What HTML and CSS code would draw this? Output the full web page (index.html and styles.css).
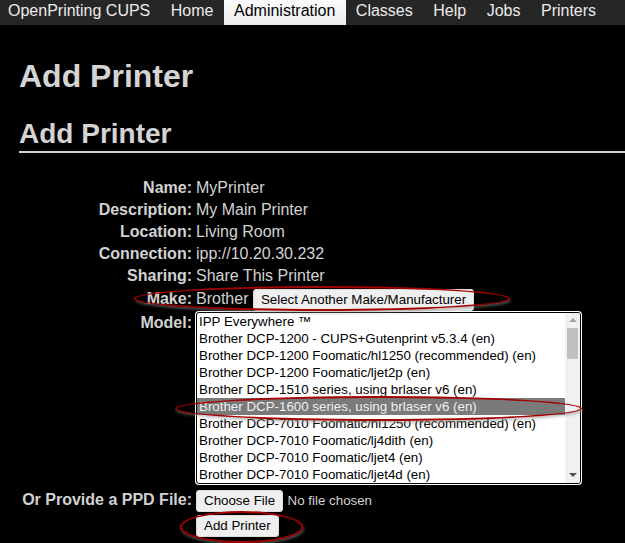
FILE: index.html
```html
<!DOCTYPE html>
<html lang="en">
<head>
<meta charset="utf-8">
<title>Add Printer - CUPS</title>
<link rel="stylesheet" href="styles.css">
</head>
<body>
<nav class="nav">
  <a class="nav-item">OpenPrinting CUPS</a>
  <a class="nav-item">Home</a>
  <a class="nav-item active">Administration</a>
  <a class="nav-item">Classes</a>
  <a class="nav-item">Help</a>
  <a class="nav-item">Jobs</a>
  <a class="nav-item">Printers</a>
</nav>
<main class="page">
  <h1 class="title">Add Printer</h1>
  <h2 class="subtitle">Add Printer</h2>
  <form class="form">
    <div class="label">Name:</div><div class="value">MyPrinter</div>
    <div class="label">Description:</div><div class="value">My Main Printer</div>
    <div class="label">Location:</div><div class="value">Living Room</div>
    <div class="label">Connection:</div><div class="value">ipp://10.20.30.232</div>
    <div class="label">Sharing:</div><div class="value">Share This Printer</div>
    <div class="label make">Make:</div><div class="value make">Brother <button type="button" class="btn">Select Another Make/Manufacturer</button></div>
    <div class="label">Model:</div>
    <div class="value">
      <div class="listbox" role="listbox">
        <div class="options">
          <div class="opt">IPP Everywhere ™</div>
          <div class="opt">Brother DCP-1200 - CUPS+Gutenprint v5.3.4 (en)</div>
          <div class="opt">Brother DCP-1200 Foomatic/hl1250 (recommended) (en)</div>
          <div class="opt">Brother DCP-1200 Foomatic/ljet2p (en)</div>
          <div class="opt">Brother DCP-1510 series, using brlaser v6 (en)</div>
          <div class="opt selected">Brother DCP-1600 series, using brlaser v6 (en)</div>
          <div class="opt">Brother DCP-7010 Foomatic/hl1250 (recommended) (en)</div>
          <div class="opt">Brother DCP-7010 Foomatic/lj4dith (en)</div>
          <div class="opt">Brother DCP-7010 Foomatic/ljet4 (en)</div>
          <div class="opt">Brother DCP-7010 Foomatic/ljet4d (en)</div>
        </div>
        <div class="scrollbar">
          <div class="arrow up"></div>
          <div class="track"><div class="thumb"></div></div>
          <div class="arrow down"></div>
        </div>
      </div>
    </div>
    <div class="label ppd">Or Provide a PPD File:</div>
    <div class="value ppd"><button type="button" class="btn">Choose File</button> <span class="nofile">No file chosen</span></div>
    <div class="label"></div>
    <div class="value submit"><button type="button" class="btn">Add Printer</button></div>
  </form>
</main>
<div class="annot e1"></div>
<div class="annot e2"></div>
<div class="annot e3"></div>
</body>
</html>
```
FILE: styles.css
```css
html, body {
  margin: 0;
  padding: 0;
  background: #000;
  height: 100%;
  overflow: hidden;
}
body {
  position: relative;
  font-family: "Liberation Sans", Arial, sans-serif;
  color: #d2d2d2;
  font-size: 16px;
}
.nav {
  display: flex;
  background: #262626;
  height: 25px;
}
.nav-item {
  font-size: 16px;
  line-height: 22px;
  padding: 0 10.5px 3px 10px;
  color: #ececec;
  white-space: nowrap;
}
.nav-item:first-child {
  padding-left: 8px;
}
.nav-item.active {
  background: linear-gradient(#fbfbfb, #ececec);
  color: #000;
}
.page {
  padding: 0 0 0 19px;
}
.title {
  margin: 33px 0 0;
  font-size: 32px;
  line-height: 36px;
  font-weight: bold;
  color: #d4d4d4;
}
.subtitle {
  margin: 24px 0 0;
  font-size: 28px;
  line-height: 32px;
  font-weight: bold;
  color: #d4d4d4;
  padding-bottom: 1px;
  border-bottom: 2px solid #d0d0d0;
}
.form {
  display: grid;
  grid-template-columns: 173px 1fr;
  column-gap: 4px;
  margin-top: 23.5px;
  line-height: 22px;
}
.label {
  font-weight: bold;
  text-align: right;
  white-space: nowrap;
}
.value {
  white-space: nowrap;
}
.make {
  padding: 1px 0;
}
.btn {
  font-family: "Liberation Sans", Arial, sans-serif;
  font-size: 13.33px;
  line-height: 16px;
  padding: 2px 7px 2px;
  background: #efefef;
  color: #000;
  border: 1px solid #dcdcdc;
  border-radius: 3px;
  vertical-align: baseline;
}
.listbox {
  display: flex;
  width: 383px;
  height: 170px;
  margin-top: 0;
  background: #fff;
  border: 1px solid #000;
  box-shadow: 0 0 0 1px #fff;
  border-radius: 3px;
  overflow: hidden;
  box-sizing: content-box;
}
.options {
  flex: 1;
  color: #000;
  font-size: 13.33px;
  line-height: 17px;
}
.opt {
  height: 17px;
  padding-left: 2px;
}
.opt.selected {
  background: #7a7a7a;
  color: #efefef;
}
.scrollbar {
  width: 15px;
  background: #f1f1f1;
  display: flex;
  flex-direction: column;
}
.arrow {
  height: 15px;
  display: flex;
  align-items: center;
  justify-content: center;
}
.arrow::before {
  content: "";
  width: 0;
  height: 0;
  border-left: 4px solid transparent;
  border-right: 4px solid transparent;
}
.arrow.up::before {
  border-bottom: 4px solid #a3a3a3;
}
.arrow.down::before {
  border-top: 4px solid #505050;
}
.track {
  flex: 1;
  padding: 0 2px;
}
.thumb {
  height: 31px;
  background: #c1c1c1;
}
.ppd {
  margin-top: 5px;
}
.nofile {
  font-size: 13.33px;
  color: #d2d2d2;
}
.submit {
  padding-top: 2px;
}
.annot {
  position: absolute;
  border: 2px solid #a50000;
  border-radius: 50%;
  box-shadow: 1px 2px 3px rgba(140, 140, 140, 0.55);
  pointer-events: none;
}
.e1 { left: 134px; top: 286px; width: 372px; height: 21px; }
.e2 { left: 175px; top: 396px; width: 403px; height: 21px; }
.e3 { left: 180px; top: 511px; width: 119px; height: 28px; }
```
